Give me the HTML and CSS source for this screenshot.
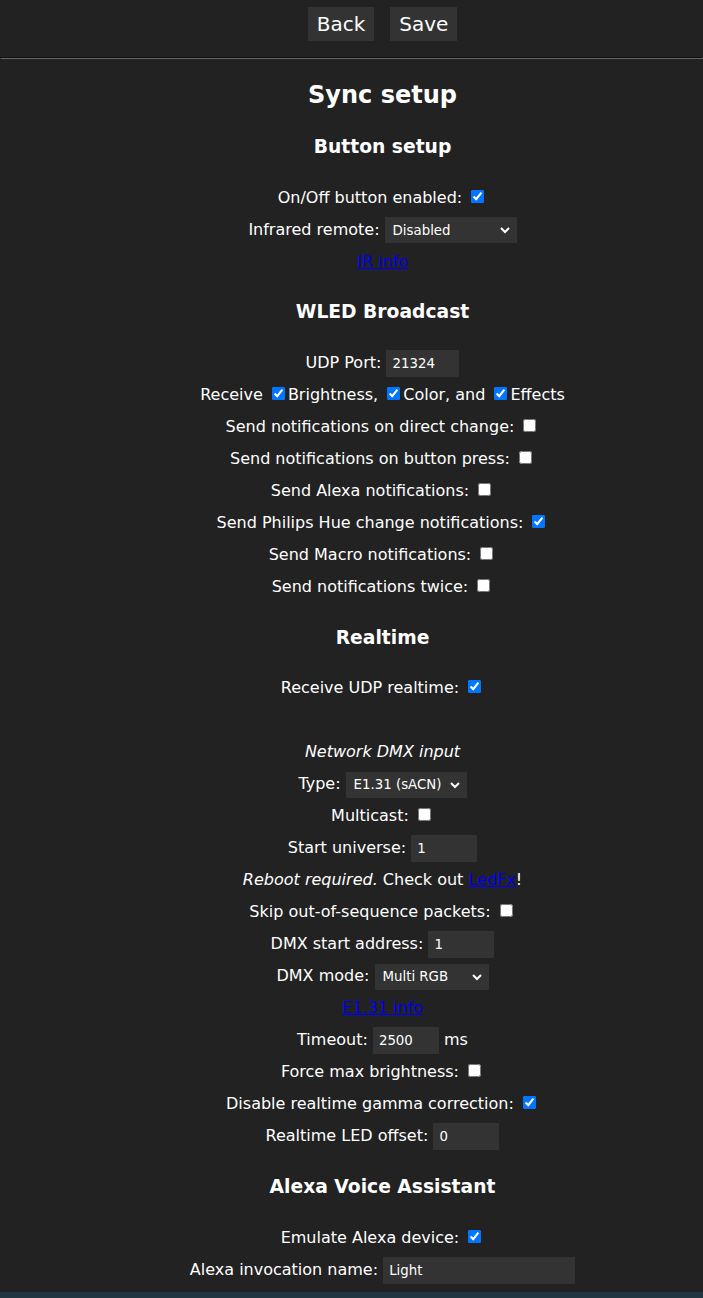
FILE: index.html
```html
<!DOCTYPE html>
<html lang="en">
<head>
    <meta charset="UTF-8">
    <meta name="viewport" content="width=device-width, initial-scale=1.0">
    <title>Sync Settings</title>
    <link rel="stylesheet" href="styles.css">
</head>
<body>
    <div class="toprow">
        <button type="button">Back</button><button type="submit">Save</button>
    </div>
    <hr>
    <form class="page" id="form_s" name="Sf">
        <h2>Sync setup</h2>

        <h3>Button setup</h3>
        On/Off button enabled: <input type="checkbox" name="BT" checked><br>
        Infrared remote: <select name="IR" class="sel-ir">
            <option value="0" selected>Disabled</option>
            <option value="1">24-key RGB</option>
            <option value="2">24-key with CT</option>
            <option value="3">40-key blue</option>
            <option value="4">44-key RGB</option>
            <option value="5">21-key RGB</option>
        </select><br>
        <a href="#" class="irinfo">IR info</a>

        <h3>WLED Broadcast</h3>
        UDP Port: <input name="UP" type="number" class="port" value="21324"><br>
        Receive <input type="checkbox" name="RB" checked>Brightness, <input type="checkbox" name="RC" checked>Color, and <input type="checkbox" name="RX" checked>Effects<br>
        Send notifications on direct change: <input type="checkbox" name="SD"><br>
        Send notifications on button press: <input type="checkbox" name="SB"><br>
        Send Alexa notifications: <input type="checkbox" name="SA"><br>
        Send Philips Hue change notifications: <input type="checkbox" name="SH" checked><br>
        Send Macro notifications: <input type="checkbox" name="SM"><br>
        Send notifications twice: <input type="checkbox" name="S2">

        <h3>Realtime</h3>
        Receive UDP realtime: <input type="checkbox" name="RD" checked><br>
        <br>
        <i>Network DMX input</i><br>
        Type: <select name="EP" class="sel-type">
            <option value="5568" selected>E1.31 (sACN)</option>
            <option value="6454">Art-Net</option>
        </select><br>
        Multicast: <input type="checkbox" name="EM"><br>
        Start universe: <input name="EU" type="number" class="num" value="1"><br>
        <i>Reboot required.</i> Check out <a href="#" class="link">LedFx</a>!<br>
        Skip out-of-sequence packets: <input type="checkbox" name="ES"><br>
        DMX start address: <input name="DA" type="number" class="num" value="1"><br>
        DMX mode: <select name="DM" class="sel-mode">
            <option value="0">Disabled</option>
            <option value="1">Single RGB</option>
            <option value="2">Single DRGB</option>
            <option value="3">Effect</option>
            <option value="4" selected>Multi RGB</option>
            <option value="5">Dimmer + Multi RGB</option>
        </select><br>
        <a href="#" class="link">E1.31 info</a><br>
        Timeout: <input name="ET" type="number" class="num" value="2500"> ms<br>
        Force max brightness: <input type="checkbox" name="FB"><br>
        Disable realtime gamma correction: <input type="checkbox" name="RG" checked><br>
        Realtime LED offset: <input name="WO" type="number" class="num" value="0">

        <h3>Alexa Voice Assistant</h3>
        Emulate Alexa device: <input type="checkbox" name="AL" checked><br>
        Alexa invocation name: <input name="AI" type="text" class="name" value="Light">
    </form>
    <div class="footbar"></div>
</body>
</html>
```

FILE: styles.css
```css
body {
    font-family: Verdana, "DejaVu Sans", sans-serif;
    text-align: center;
    background: #222;
    color: #fff;
    line-height: 200%;
    margin: 0;
}
.toprow {
    display: flex;
    justify-content: center;
    padding-left: 62px;
}
button {
    box-sizing: border-box;
    height: 34px;
    background: #333;
    color: #fff;
    font-family: Verdana, "DejaVu Sans", sans-serif;
    border: 0.3ch solid #333;
    font-size: 20px;
    line-height: normal;
    padding: 1px 6px;
    margin: 7px 8px 8px;
}
hr {
    border-color: #666;
}
.page {
    padding-left: 62px;
}
h2 {
    font-size: 24px;
}
input, select {
    background: #333;
    color: #fff;
    font-family: Verdana, "DejaVu Sans", sans-serif;
    border: 0.5ch solid #333;
}
input[type="checkbox"] {
    border: none;
}
input[type="number"], input[type="text"] {
    box-sizing: border-box;
    height: 27px;
}
.port {
    width: 73px;
}
.num {
    width: 66px;
}
.name {
    width: 192px;
}
select {
    box-sizing: border-box;
    height: 26px;
}
.sel-ir {
    width: 132px;
}
.sel-type {
    width: 121px;
}
.sel-mode {
    width: 114px;
}
a {
    color: #00e;
}
.footbar {
    position: fixed;
    left: 0;
    right: 0;
    bottom: 0;
    height: 6px;
    background: #213640;
}
```
